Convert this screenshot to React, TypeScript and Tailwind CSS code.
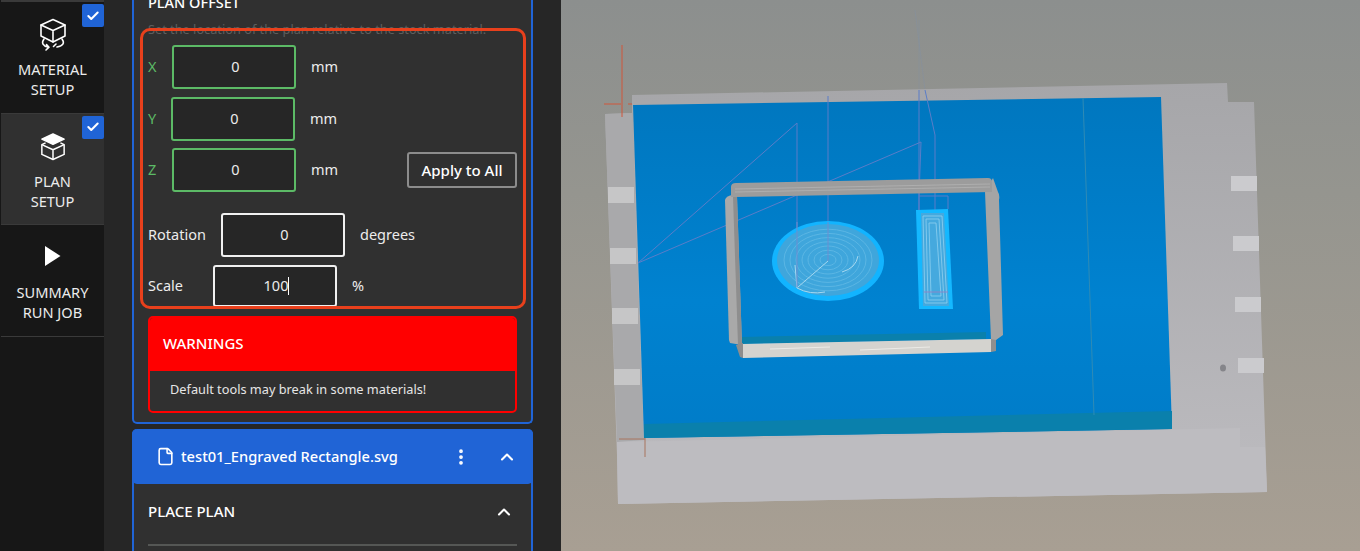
import React from 'react';
import { Check, ChevronUp, EllipsisVertical, File } from 'lucide-react';

const CubeRotate = () => (
  <svg width="28" height="34" viewBox="0 0 28 34" fill="none" stroke="white" strokeWidth="1.6" strokeLinejoin="round" strokeLinecap="round">
    <path d="M14 1.5 L26 7 V18 L14 24 L2 18 V7 Z" />
    <path d="M2 7 L14 12.5 L26 7 M14 12.5 V24" />
    <path d="M5 21 C2 25 4 28 9 29 M7.5 26.5 L10 29.2 L7 32" />
    <path d="M23 21 C26 25 24 28 18 29 M17 26 L14.5 28.5" />
  </svg>
);

const CubeLayer = () => (
  <svg width="26" height="28" viewBox="0 0 28 30" fill="none" stroke="white" strokeWidth="1.6" strokeLinejoin="round">
    <path d="M14 1 L26 6.5 L14 12 L2 6.5 Z" fill="white" />
    <path d="M6 10.5 L2 12.5 V23 L14 28.5 L26 23 V12.5 L22 10.5" />
    <path d="M2 12.5 L14 18 L26 12.5 M14 18 V28.5" />
  </svg>
);

const Play = () => (
  <svg width="16" height="20" viewBox="0 0 16 20" fill="white" className="-mt-1">
    <path d="M0 0 L15.5 10 L0 20 Z" />
  </svg>
);

const NavItem = ({ icon, lines, active, checked }: { icon: React.ReactNode; lines: string[]; active?: boolean; checked?: boolean }) => (
  <div className={`relative flex h-[111.5px] flex-col items-center border-b border-[#3a3a3a] ${active ? 'bg-[#303030]' : 'bg-[#171717]'}`}>
    {checked && (
      <div className="absolute right-0 top-0.5 flex h-[23px] w-[22px] items-center justify-center rounded-[2px] bg-[#2064d6]">
        <Check size={14} strokeWidth={3.5} className="text-white" />
      </div>
    )}
    <div className="mt-[16px] flex h-[34px] items-center justify-center">{icon}</div>
    <div className="mt-[7px] text-center text-[14.6px] leading-[20px] text-[#ececec]">
      {lines.map((l) => (
        <div key={l}>{l}</div>
      ))}
    </div>
  </div>
);

const Field = ({ value, tone, caret, short }: { value: string; tone: 'green' | 'white'; caret?: boolean; short?: boolean }) => (
  <div className={`flex w-[124px] shrink-0 items-center justify-center rounded-[3px] border-2 bg-[#262626] pl-[3px] text-[14.5px] text-[#ececec] ${short ? 'h-[42px]' : 'h-[44px]'} ${tone === 'green' ? 'border-[#5cba66]' : 'border-[#f0f0f0]'}`}>
    {value}
    {caret && <span className="h-[18px] w-px bg-white" />}
  </div>
);

const Scene = () => (
  <svg className="h-full w-full" viewBox="561 0 799 551" preserveAspectRatio="none">
    <defs>
      <linearGradient id="bg" x1="0" y1="0" x2="0" y2="1">
        <stop offset="0" stopColor="#8c8f8e" />
        <stop offset="0.35" stopColor="#95958f" />
        <stop offset="1" stopColor="#a89f93" />
      </linearGradient>
      <linearGradient id="plate" x1="0" y1="0" x2="0" y2="1">
        <stop offset="0" stopColor="#0077bf" />
        <stop offset="0.6" stopColor="#0082d0" />
        <stop offset="1" stopColor="#007cc8" />
      </linearGradient>
      <linearGradient id="stock" x1="0" y1="0" x2="0" y2="1">
        <stop offset="0" stopColor="#a6a6a9" />
        <stop offset="1" stopColor="#bdbcc0" />
      </linearGradient>
    </defs>
    <rect x="561" y="0" width="799" height="551" fill="url(#bg)" />

    {/* faint lines above the stock */}
    <path d="M919 20 L919 90 M915 10 L925 90" stroke="#7f8ea8" strokeWidth="1" opacity="0.35" fill="none" />

    {/* stock */}
    <path d="M632 95 L1227 83 L1228 102 L1254 102 L1267 492 L618 504 L617 455 L605 114 L632 113 Z" fill="url(#stock)" />
    <path d="M605 114 L632 113 L644 440 L617 442 Z" fill="#a9a9ab" />
    <path d="M617 442 L1240 428 L1240 447 L1265 447 L1267 492 L618 504 Z" fill="#bdbcc0" />
    {[[608, 187], [610, 248], [612, 308], [614, 369]].map(([x, y]) => (
      <rect key={y} x={x} y={y} width="26" height="16" fill="#c6c6c7" />
    ))}
    {[[1231, 176], [1233, 236], [1235, 297], [1238, 358]].map(([x, y]) => (
      <rect key={y} x={x} y={y} width="26" height="15" fill="#cbcbce" />
    ))}
    <ellipse cx="1223" cy="368" rx="3" ry="3.5" fill="#85858a" />

    {/* plate */}
    <path d="M633 105 L1161 97 L1172 429 L644 438 Z" fill="url(#plate)" />
    <path d="M644 424 L1172 411 L1172 429 L644 438 Z" fill="#0a80ac" />
    <path d="M1083 98 L1094 415" stroke="#2f8bb5" strokeWidth="1" fill="none" />

    {/* toolpath lines, they pass behind the frame */}
    <path d="M638 263 L797 123 L797 262 M638 263 L921 142 L919 196 M828 96 L828 260 M919 90 L919 210 M925 90 L935 135 L935 215" stroke="#5a7dc8" strokeWidth="1" fill="none" />

    {/* frame */}
    <path d="M725 200 Q726 196 732 195 L737 196 L742 345 L730 343 L729 340 Z" fill="#a9a9a9" />
    <path d="M733 197 L737 197 L742 345 L738 345 Z" fill="#8e8e8e" />
    <path d="M985 192 L993 178 L998 192 Q1000 195 999 200 L1003 335 L996 340 L991 340 Z" fill="#a5a5a5" />
    <path d="M731 187 Q731 183 736 183 L988 178 Q992 178 992 182 L992 192 L735 197 L731 197 Z" fill="#9c9c9c" />
    <path d="M735 189 L990 184 M735 192 L990 187" stroke="#aeaeae" strokeWidth="1" />
    <path d="M742 337 L986 332 L986 339 L742 344 Z" fill="#0a80ac" />
    <path d="M736 345 L743 343 L743 358 L740 357 Z" fill="#8d8d8d" />
    <path d="M743 344 L991 339 L991 352 L743 358 Z" fill="#d4d3cf" />
    <path d="M770 349 L830 347 M860 350 L930 347" stroke="#ecebe7" strokeWidth="1" />
    <path d="M991 339 L996 340 L996 351 L991 352 Z" fill="#8f8f8f" />

    {/* engraved shapes */}
    <ellipse cx="828" cy="261" rx="56" ry="40" fill="#12b4ff" />
    <ellipse cx="828" cy="260" rx="51" ry="36" fill="#3fa6dc" />
    {[44, 38, 32, 26, 20, 14, 8].map((r) => (
      <ellipse key={r} cx="828" cy="260" rx={r} ry={r * 0.7} fill="none" stroke="#5bb6e4" strokeWidth="1" />
    ))}
    <path d="M798 287 L828 261 M842 272 Q856 268 858 256 M795 265 L797 288 Q810 295 825 292" stroke="#a6d8f0" strokeWidth="1" fill="none" />
    <path d="M797 222 L797 287 M828 222 L828 261" stroke="#6c8ed0" strokeWidth="1" fill="none" />
    <path d="M916 210 L948 209 L953 309 L919 309 Z" fill="#14b8ff" />
    <path d="M921 213 L944 213 L949 306 L923 306 Z" fill="#45a9de" />
    <path d="M923 216 L942 216 L947 303 L925 303 Z M926 219 L939 219 L944 300 L928 300 Z M929 223 L936 223 L941 296 L931 296 Z" stroke="#8fd0f0" strokeWidth="0.8" fill="none" />
    <path d="M924 292 L948 292" stroke="#8a86c8" strokeWidth="1" />
    <path d="M919 196 L919 210 M948 196 L948 209 M919 196 L948 196" stroke="#5a7dc8" strokeWidth="1" fill="none" />

    {/* axes */}
    <path d="M622 45 L622 117 M604 104 L621 104 M628 104 L632 104" stroke="#d0573a" strokeWidth="1" fill="none" />
    <path d="M645 438 L645 457 M619 439 L645 439" stroke="#a8755e" strokeWidth="1" fill="none" />
  </svg>
);

export default function App() {
  return (
    <div className="flex h-[551px] w-[1360px] overflow-hidden bg-[#262626] font-['Noto_Sans','Open_Sans',sans-serif] text-[#ececec]">
      <aside className="h-full w-[104px] shrink-0 bg-[#171717] pl-px">
        <div className="h-0.5 bg-[#3a3a3a]" />
        <NavItem icon={<CubeRotate />} lines={['MATERIAL', 'SETUP']} checked />
        <NavItem icon={<CubeLayer />} lines={['PLAN', 'SETUP']} active checked />
        <NavItem icon={<Play />} lines={['SUMMARY', 'RUN JOB']} />
      </aside>

      <main className="relative h-full w-[457px] shrink-0 pl-[28px] pr-[28px]">
        <div className="mt-[-8px] h-[432px] rounded-b-[5px] border-2 border-t-0 border-[#2064d6] bg-[#303030] pl-[14px] pr-[14px]">
          <div className="text-[14.5px] font-medium leading-[20px] text-white">PLAN OFFSET</div>
          <div className="mt-[7px] text-[12.75px] leading-[20px] text-[#5e5e5e]">Set the location of the plan relative to the stock material.</div>

          <div className="mt-[6px] flex items-center">
            <span className="w-[24px] text-[14.5px] text-[#5cba66]">X</span>
            <Field value="0" tone="green" />
            <span className="ml-[15px] text-[14.5px]">mm</span>
          </div>
          <div className="mt-[8px] flex items-center">
            <span className="w-[23px] text-[14.5px] text-[#5cba66]">Y</span>
            <Field value="0" tone="green" />
            <span className="ml-[15px] text-[14.5px]">mm</span>
          </div>
          <div className="mt-[7px] flex items-center">
            <span className="w-[24px] text-[14.5px] text-[#5cba66]">Z</span>
            <Field value="0" tone="green" />
            <span className="ml-[15px] text-[14.5px]">mm</span>
            <button className="ml-auto flex h-[36px] w-[110px] items-center justify-center rounded-[3px] border-2 border-[#8c8c8c] text-[15px] font-medium text-white">Apply to All</button>
          </div>

          <div className="mt-[21px] flex items-center">
            <span className="w-[73px] text-[14.5px]">Rotation</span>
            <Field value="0" tone="white" />
            <span className="ml-[15px] text-[14.5px]">degrees</span>
          </div>
          <div className="mt-[8px] flex items-center">
            <span className="w-[65px] text-[14.5px]">Scale</span>
            <Field value="100" tone="white" caret short />
            <span className="ml-[15px] text-[14.5px]">%</span>
          </div>

          <div className="mt-[9px] h-[97px] overflow-hidden rounded-[5px] border-2 border-[#ff0000]">
            <div className="flex h-[53px] items-center bg-[#ff0000] pb-[2px] pl-[13px] text-[15px] font-medium text-white">WARNINGS</div>
            <div className="pl-[20px] pt-[8px] text-[12.75px] leading-[20px] text-[#e6e6e6]">Default tools may break in some materials!</div>
          </div>
        </div>

        <div className="mt-[5px] rounded-t-[5px] border-x-2 border-[#2064d6] bg-[#303030]">
          <div className="mx-[-2px] flex h-[55px] items-center rounded-[5px] bg-[#2064d6] pl-[24px] pr-[16px] text-white">
            <File size={19} strokeWidth={2} />
            <span className="ml-[6px] text-[14.65px] font-medium">test01_Engraved Rectangle.svg</span>
            <EllipsisVertical size={20} strokeWidth={2.5} className="ml-auto mr-[26px]" />
            <ChevronUp size={20} strokeWidth={2.5} />
          </div>
          <div className="flex h-[55px] items-center pl-[14px] pr-[17px]">
            <span className="text-[15px] font-medium text-white">PLACE PLAN</span>
            <ChevronUp size={20} strokeWidth={2.5} className="ml-auto text-white" />
          </div>
          <div className="mx-[14px] mt-[5px] h-0.5 bg-[#555755]" />
          <div className="h-2" />
        </div>

        {/* hand-drawn annotation over the inputs */}
        <div className="absolute left-[36px] top-[28px] h-[281px] w-[386px] rounded-[10px] border-[3px] border-[#e8401c]" />
      </main>

      <section className="h-full min-w-0 flex-1">
        <Scene />
      </section>
    </div>
  );
}
